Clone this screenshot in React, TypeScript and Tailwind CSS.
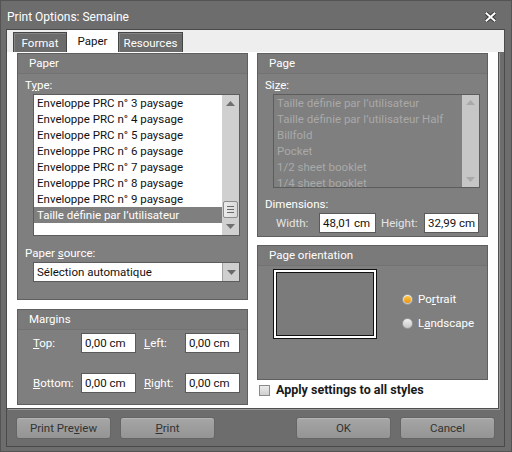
import React from "react";

// Small triangular arrow used by the scroll bars and the combo box.
function Arrow({ dir, color }: { dir: "up" | "down"; color: string }) {
  return (
    <svg width="9" height="5" viewBox="0 0 9 5" className="block">
      <path d={dir === "up" ? "M0 5 L4.5 0 L9 5 Z" : "M0 0 L4.5 5 L9 0 Z"} fill={color} />
    </svg>
  );
}

function ScrollBar({ disabled }: { disabled?: boolean }) {
  if (disabled) {
    return (
      <div className="flex w-[17px] shrink-0 flex-col items-center justify-between bg-[#c6c6c6] pb-[5px] pt-[5px]">
        <Arrow dir="up" color="#a9a9a9" />
        <Arrow dir="down" color="#a9a9a9" />
      </div>
    );
  }
  return (
    <div className="flex w-[17px] shrink-0 flex-col bg-[#d0d0d0]">
      <div className="flex h-[16px] items-center justify-center">
        <Arrow dir="up" color="#707070" />
      </div>
      <div className="flex-1" />
      <div className="mx-[1px] flex h-[17px] flex-col items-center justify-center gap-[2px] rounded-[2px] border border-[#8c8c8c] bg-linear-to-r from-[#ececec] to-[#d8d8d8]">
        <div className="h-px w-[7px] bg-[#6a6a6a]" />
        <div className="h-px w-[7px] bg-[#6a6a6a]" />
        <div className="h-px w-[7px] bg-[#6a6a6a]" />
      </div>
      <div className="flex h-[17px] items-center justify-center">
        <Arrow dir="down" color="#707070" />
      </div>
    </div>
  );
}

function Group({ title, className, children }: { title: string; className?: string; children?: React.ReactNode }) {
  return (
    <div className={"flex flex-col border border-[#5f5f5f] bg-[#7f7f7f] " + (className ?? "")}>
      <div className="h-[20px] shrink-0 border-b border-[#727272] bg-[#7a7a7a] pl-[11px] leading-[19px] text-white">
        {title}
      </div>
      {children}
    </div>
  );
}

function TextBox({ value, w }: { value: string; w: string }) {
  return (
    <div className={"h-[20px] border border-[#5a5a5a] bg-white pl-[3px] leading-[18px] text-[#111] " + w}>{value}</div>
  );
}

const paperTypes = [
  "Enveloppe PRC n° 3 paysage",
  "Enveloppe PRC n° 4 paysage",
  "Enveloppe PRC n° 5 paysage",
  "Enveloppe PRC n° 6 paysage",
  "Enveloppe PRC n° 7 paysage",
  "Enveloppe PRC n° 8 paysage",
  "Enveloppe PRC n° 9 paysage",
];

const sizes = [
  "Taille définie par l’utilisateur",
  "Taille définie par l’utilisateur Half",
  "Billfold",
  "Pocket",
  "1/2 sheet booklet",
  "1/4 sheet booklet",
];

function DialogButton({ children }: { children: React.ReactNode }) {
  return (
    <div className="flex h-[22px] w-[95px] items-center justify-center rounded-[3px] border border-[#656565] bg-linear-to-b from-[#a6a6a6] to-[#949494] text-[#333] shadow-[inset_0_1px_0_#b4b4b4]">
      {children}
    </div>
  );
}

function Radio({ checked }: { checked?: boolean }) {
  return (
    <div className="flex h-[11px] w-[11px] items-center justify-center rounded-full border border-[#9a9a9a] bg-linear-to-b from-[#f0f0f0] to-[#c8c8c8]">
      {checked && <div className="h-[7px] w-[7px] rounded-full bg-linear-to-b from-[#ffc640] to-[#e8920c]" />}
    </div>
  );
}

export default function App() {
  return (
    <div className="flex h-[452px] w-[512px] flex-col border border-[#545454] bg-[#6d6d6d] font-['Roboto',sans-serif] text-[11.5px] leading-[16px]">
      {/* title bar */}
      <div className="flex h-[28px] shrink-0 items-center justify-between pl-[6px] pr-[15px] pt-[3px] text-[12px] text-white">
        <span>Print Options: Semaine</span>
        <svg width="11" height="10" viewBox="0 0 11 10">
          <path d="M1.5 1.5 L9.5 8.5 M9.5 1.5 L1.5 8.5" stroke="#3a3a3a" strokeWidth="4" strokeLinecap="square" />
          <path d="M1.5 1.5 L9.5 8.5 M9.5 1.5 L1.5 8.5" stroke="#ffffff" strokeWidth="2" strokeLinecap="square" />
        </svg>
      </div>

      {/* client frame */}
      <div className="mb-[4px] ml-[5px] mr-[6px] flex flex-1 flex-col border border-[#4a4a4a]">
        {/* tab strip */}
        <div className="flex h-[22px] shrink-0 items-end bg-[#eeeeee] pl-[6px]">
          <div className="flex h-[20px] w-[54px] items-center justify-center border border-b-0 border-[#454545] bg-[#6c6c6c] text-white shadow-[inset_1px_1px_0_#858585]">
            Format
          </div>
          <div className="flex h-[22px] w-[51px] items-center justify-center bg-white pb-[1px] text-[#111]">Paper</div>
          <div className="flex h-[20px] w-[65px] items-center justify-center border border-b-0 border-[#454545] bg-[#6c6c6c] text-white shadow-[inset_1px_1px_0_#858585]">
            Resources
          </div>
        </div>

        {/* tab page */}
        <div className="mr-[5px] flex h-[357px] shrink-0 gap-[9px] border-b border-r border-[#505050] bg-white pl-[10px] pr-[10px] pt-[1px] shadow-[1px_1px_0_#9a9a9a]">
          {/* left column */}
          <div className="flex w-[231px] flex-col gap-[9px]">
            <Group title="Paper" className="h-[247px]">
              <div className="pl-[7px] pt-[4px] text-white">
                <div className="h-[14px] leading-[14px]">
                  T<span className="underline">y</span>pe:
                </div>
                <div className="ml-[8px] mt-[2px] flex h-[142px] w-[207px] border border-[#5c5c5c] bg-white">
                  <div className="flex-1 overflow-hidden text-[#111]">
                    {paperTypes.map((t) => (
                      <div key={t} className="h-[16px] pl-[3px] leading-[16px]">
                        {t}
                      </div>
                    ))}
                    <div className="h-[16px] bg-[#7f7f7f] pl-[3px] leading-[16px] text-white">
                      Taille définie par l’utilisateur
                    </div>
                  </div>
                  <ScrollBar />
                </div>
                <div className="mt-[10px] h-[14px] leading-[14px]">
                  Paper <span className="underline">s</span>ource:
                </div>
                <div className="ml-[8px] mt-[2px] flex h-[20px] w-[207px] border border-[#5c5c5c] bg-white">
                  <div className="flex-1 pl-[3px] leading-[18px] text-[#111]">Sélection automatique</div>
                  <div className="flex w-[17px] items-center justify-center border-l border-[#a0a0a0] bg-[#cfcfcf]">
                    <Arrow dir="down" color="#6a6a6a" />
                  </div>
                </div>
              </div>
            </Group>

            <Group title="Margins" className="h-[96px]">
              <div className="grid grid-cols-[48px_55px_49px_55px] gap-y-[20px] pl-[15px] pt-[3px] text-white">
                <div className="leading-[20px]">
                  <span className="underline">T</span>op:
                </div>
                <TextBox value="0,00 cm" w="w-[55px]" />
                <div className="pl-[8px] leading-[20px]">
                  <span className="underline">L</span>eft:
                </div>
                <TextBox value="0,00 cm" w="w-[55px]" />
                <div className="leading-[20px]">
                  <span className="underline">B</span>ottom:
                </div>
                <TextBox value="0,00 cm" w="w-[55px]" />
                <div className="pl-[8px] leading-[20px]">
                  <span className="underline">R</span>ight:
                </div>
                <TextBox value="0,00 cm" w="w-[55px]" />
              </div>
            </Group>
          </div>

          {/* right column */}
          <div className="flex w-[231px] flex-col">
            <Group title="Page" className="h-[184px]">
              <div className="pl-[7px] pt-[4px] text-white">
                <div className="h-[14px] leading-[14px]">
                  Si<span className="underline">z</span>e:
                </div>
                <div className="ml-[8px] mt-[2px] flex h-[94px] w-[207px] border border-[#5c5c5c] bg-[#7f7f7f]">
                  <div className="flex-1 overflow-hidden text-[#a9a9a9]">
                    {sizes.map((t) => (
                      <div key={t} className="h-[16px] shrink-0 whitespace-nowrap pl-[3px] leading-[16px]">
                        {t}
                      </div>
                    ))}
                  </div>
                  <ScrollBar disabled />
                </div>
                <div className="mt-[9px] h-[14px] leading-[14px]">Dimensions:</div>
                <div className="mt-[2px] flex h-[20px] items-center">
                  <div className="w-[54px] pl-[11px] text-[#e4e4e4]">Width:</div>
                  <TextBox value="48,01 cm" w="w-[57px]" />
                  <div className="w-[48px] pl-[5px] text-[#e4e4e4]">Height:</div>
                  <TextBox value="32,99 cm" w="w-[55px]" />
                </div>
              </div>
            </Group>

            <Group title="Page orientation" className="mt-[8px] h-[135px]">
              <div className="flex pl-[15px] pt-[3px]">
                <div className="h-[70px] w-[104px] border border-[#111] bg-white p-[2px]">
                  <div className="h-full w-full border border-[#111] bg-[#7b7b7b]" />
                </div>
                <div className="ml-[25px] mt-[22px] flex flex-col gap-[8px] text-white">
                  <div className="flex h-[16px] items-center gap-[5px]">
                    <Radio checked />
                    <span>
                      Po<span className="underline">r</span>trait
                    </span>
                  </div>
                  <div className="flex h-[16px] items-center gap-[5px]">
                    <Radio />
                    <span>
                      L<span className="underline">a</span>ndscape
                    </span>
                  </div>
                </div>
              </div>
            </Group>

            <div className="mt-[3px] flex h-[14px] items-center gap-[6px] pl-[2px]">
              <div className="h-[11px] w-[11px] border border-[#8a8a8a] bg-linear-to-b from-[#ececec] to-[#cfcfcf]" />
              <span className="text-[12.5px] font-bold text-[#1a1a1a]">Apply settings to all styles</span>
            </div>
          </div>
        </div>

        {/* dialog buttons */}
        <div className="flex flex-1 items-start justify-between pl-[9px] pr-[9px] pt-[8px]">
          <div className="flex gap-[9px]">
            <DialogButton>
              Print Pre<span className="underline">v</span>iew
            </DialogButton>
            <DialogButton>
              <span className="underline">P</span>rint
            </DialogButton>
          </div>
          <div className="flex gap-[9px]">
            <DialogButton>OK</DialogButton>
            <DialogButton>Cancel</DialogButton>
          </div>
        </div>
      </div>
    </div>
  );
}
